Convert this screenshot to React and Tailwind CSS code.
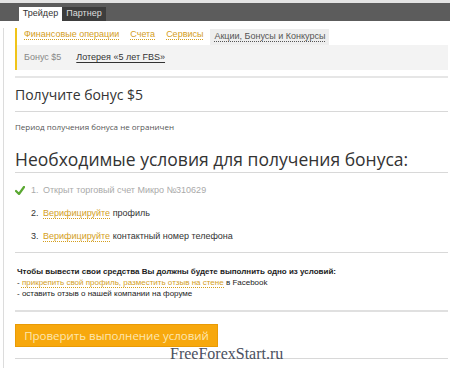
export default function App() {
  const link = "text-[#d49e1c] underline decoration-dotted underline-offset-2";
  return (
    <div className="w-[450px] h-[368px] bg-white overflow-hidden relative" style={{ fontFamily: '"Liberation Sans", Arial, sans-serif' }}>
      <div className="h-[3px] bg-[#e4e4e4]" />
      <div className="h-[18px] bg-[#5c5c5c] flex items-end pl-[19px]">
        <div className="h-[14px] w-[43px] bg-white text-[9px] text-[#333] flex items-center justify-center">Трейдер</div>
        <div className="h-[14px] w-[44px] bg-[#3d3d3d] text-[9px] text-[#ddd] flex items-center justify-center">Партнер</div>
      </div>
      <div className="ml-[3px] border-l border-[#dcdcdc] pl-[11px] pr-[2px] h-[347px]">
        {/* subnav */}
        <div className="mt-[7px] border-l-[2px] border-[#f0c419] w-[433px]">
          <div className="h-[17px] flex items-end text-[9px] pl-[7px]">
            <span className={`${link} mb-[4px]`}>Финансовые операции</span>
            <span className={`${link} mb-[4px] ml-[11px]`}>Счета</span>
            <span className={`${link} mb-[4px] ml-[11px]`}>Сервисы</span>
            <span className="ml-[7px] h-[16px] px-[4px] bg-[#eeeeee] text-[#555] flex items-center underline decoration-dotted underline-offset-2">Акции, Бонусы и Конкурсы</span>
          </div>
          <div className="h-[25px] bg-[#f3f3f3] flex items-center text-[9px] pl-[7px]">
            <span className="text-[#888]">Бонус $5</span>
            <span className="ml-[15px] text-[#333] underline underline-offset-2">Лотерея «5 лет FBS»</span>
          </div>
        </div>
        <div className="mt-[6px] h-[2px] bg-[#e6e6e6] w-[433px]" />
        <div className="h-[33px] flex items-center text-[14px] text-[#333]" style={{ fontFamily: '"Open Sans", sans-serif' }}>Получите бонус $5</div>
        <div className="h-px bg-[#d8d8d8] w-[433px]" />
        <div className="mt-[9px] text-[8px] text-[#555]" style={{ fontFamily: '"Open Sans", sans-serif' }}>Период получения бонуса не ограничен</div>
        <div className="mt-[14px] text-[17.5px] leading-[24px] text-[#333] whitespace-nowrap" style={{ fontFamily: '"Open Sans", sans-serif' }}>Необходимые условия для получения бонуса:</div>
        <div className="mt-[1px] h-px bg-[#d8d8d8] w-[433px]" />
        <div className="text-[9px]">
          <div className="h-[23px] mt-[6px] flex items-center text-[#aaa]">
            <svg width="10" height="9" viewBox="0 0 10 9" className="mr-[6px]">
              <path d="M1 5 L4 8 L9 1" stroke="#5aa832" strokeWidth="2.2" fill="none" strokeLinecap="round" strokeLinejoin="round" />
            </svg>
            <span className="w-[12px]">1.</span>
            <span>Открыт торговый счет Микро №310629</span>
          </div>
          <div className="h-[23px] flex items-center pl-[16px] text-[#333]">
            <span className="w-[12px]">2.</span>
            <span className={link}>Верифицируйте</span>
            <span>&nbsp;профиль</span>
          </div>
          <div className="h-[23px] flex items-center pl-[16px] text-[#333]">
            <span className="w-[12px]">3.</span>
            <span className={link}>Верифицируйте</span>
            <span>&nbsp;контактный номер телефона</span>
          </div>
        </div>
        <div className="mt-[4px] h-px bg-[#d8d8d8] w-[433px]" />
        <div className="pl-[2px] mt-[13px] text-[8px] leading-[11px] text-[#222]">
          <div className="font-bold">Чтобы вывести свои средства Вы должны будете выполнить одно из условий:</div>
          <div>- <span className={link}>прикрепить свой профиль, разместить отзыв на стене </span>в Facebook</div>
          <div>- оставить отзыв о нашей компании на форуме</div>
        </div>
        <div className="mt-[11px] h-[2px] bg-[#e0e0e0] w-[433px]" />
        <div className="mt-[12px] w-[203px] h-[23px] bg-[#f7a80d] border border-[#e99b05] flex items-center justify-center text-[11.5px] text-[#fde7b0] whitespace-nowrap" style={{ fontFamily: '"Open Sans", sans-serif' }}>Проверить выполнение условий</div>
        <div className="mt-[11px] h-px bg-[#d8d8d8] w-[433px]" />
      </div>
      <div className="absolute left-[170px] top-[346px] text-[16px] text-[#4a5060] leading-none" style={{ fontFamily: '"Liberation Serif", serif' }}>FreeForexStart.ru</div>
    </div>
  );
}
